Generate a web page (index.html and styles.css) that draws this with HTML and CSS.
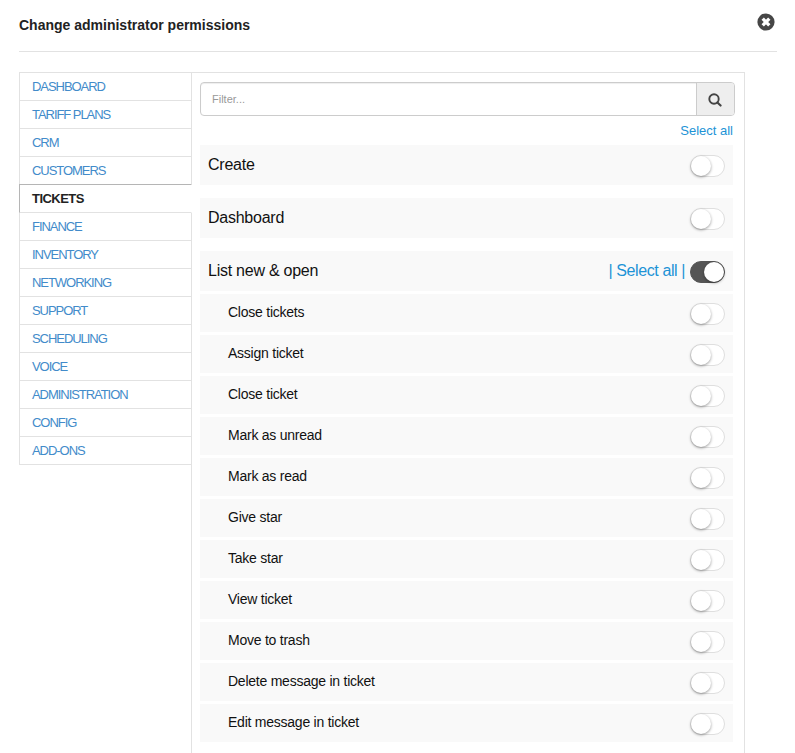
FILE: index.html
```html
<!DOCTYPE html>
<html lang="en">
<head>
<meta charset="utf-8">
<title>Change administrator permissions</title>
<link rel="stylesheet" href="styles.css">
</head>
<body>
<header class="dialog-header">
  <h1>Change administrator permissions</h1>
  <svg class="close" viewBox="0 0 18 18" width="18" height="18"><circle cx="9" cy="9" r="8.6" fill="#464646"/><path d="M5.7 5.7l6.6 6.6M12.3 5.7l-6.6 6.6" stroke="#fff" stroke-width="3.3"/></svg>
</header>
<main class="layout">
  <nav class="tabs">
    <a>DASHBOARD</a>
    <a>TARIFF PLANS</a>
    <a>CRM</a>
    <a>CUSTOMERS</a>
    <a class="active">TICKETS</a>
    <a>FINANCE</a>
    <a>INVENTORY</a>
    <a>NETWORKING</a>
    <a>SUPPORT</a>
    <a>SCHEDULING</a>
    <a>VOICE</a>
    <a>ADMINISTRATION</a>
    <a>CONFIG</a>
    <a>ADD-ONS</a>
  </nav>
  <section class="panel">
    <div class="filter">
      <span class="placeholder">Filter...</span>
      <span class="search"><svg viewBox="0 0 14 14" width="14" height="14"><circle cx="6" cy="6" r="4.7" fill="none" stroke="#444" stroke-width="1.9"/><path d="M9.4 9.4l3.2 3.2" stroke="#444" stroke-width="2.1" stroke-linecap="round"/></svg></span>
    </div>
    <a class="select-all">Select all</a>
    <div class="row group"><span class="label">Create</span><i class="toggle"></i></div>
    <div class="row group"><span class="label">Dashboard</span><i class="toggle"></i></div>
    <div class="row group parent"><span class="label">List new &amp; open</span><span class="group-select">| Select all |</span><i class="toggle on"></i></div>
    <div class="row child"><span class="label">Close tickets</span><i class="toggle"></i></div>
    <div class="row child"><span class="label">Assign ticket</span><i class="toggle"></i></div>
    <div class="row child"><span class="label">Close ticket</span><i class="toggle"></i></div>
    <div class="row child"><span class="label">Mark as unread</span><i class="toggle"></i></div>
    <div class="row child"><span class="label">Mark as read</span><i class="toggle"></i></div>
    <div class="row child"><span class="label">Give star</span><i class="toggle"></i></div>
    <div class="row child"><span class="label">Take star</span><i class="toggle"></i></div>
    <div class="row child"><span class="label">View ticket</span><i class="toggle"></i></div>
    <div class="row child"><span class="label">Move to trash</span><i class="toggle"></i></div>
    <div class="row child"><span class="label">Delete message in ticket</span><i class="toggle"></i></div>
    <div class="row child"><span class="label">Edit message in ticket</span><i class="toggle"></i></div>
  </section>
</main>
</body>
</html>
```
FILE: styles.css
```css
* { box-sizing: border-box; }
body {
  margin: 0;
  background: #fff;
  color: #222;
  font-family: "Liberation Sans", Arial, sans-serif;
}
.dialog-header {
  display: flex;
  justify-content: space-between;
  margin: 0 18px 0 19px;
  height: 52px;
  border-bottom: 1px solid #e2e2e2;
}
h1 { margin: 17px 0 0; font-size: 14px; line-height: 17px; }
.close { margin: 13px 2px 0 0; }
.layout {
  display: flex;
  align-items: flex-start;
  margin: 20px 0 0 19px;
}
.tabs {
  position: relative;
  z-index: 1;
  width: 173px;
  margin-right: -1px;
  border-top: 1px solid #e2e2e2;
}
.tabs a {
  display: block;
  height: 28px;
  padding-left: 12px;
  border: 1px solid #e2e2e2;
  border-top: 0;
  color: #428bca;
  font-size: 13px;
  line-height: 28px;
  letter-spacing: -1.05px;
}
.tabs .active {
  height: 29px;
  margin-top: -1px;
  border-top: 1px solid #b5b5b5;
  border-left-color: #b5b5b5;
  border-right-color: #fff;
  background: #fff;
  color: #222;
  font-weight: bold;
  letter-spacing: -0.55px;
}
.panel {
  width: 554px;
  height: 681px;
  padding: 9px 9px 0 8px;
  border: 1px solid #e2e2e2;
  border-bottom: 0;
}
.filter {
  display: flex;
  width: 535px;
  height: 34px;
  border: 1px solid #ccc;
  border-radius: 4px;
  overflow: hidden;
  box-shadow: inset 0 1px 1px rgba(0, 0, 0, .07);
}
.placeholder {
  flex: 1;
  padding-left: 11px;
  color: #999;
  font-size: 11px;
  line-height: 32px;
}
.search {
  display: flex;
  align-items: center;
  justify-content: center;
  width: 38px;
  padding: 1px 2px 0 0;
  border-left: 1px solid #ccc;
  background: #eee;
}
.select-all {
  display: block;
  width: 533px;
  height: 29px;
  color: #1d93d6;
  font-size: 13px;
  line-height: 30px;
  text-align: right;
}
.row {
  display: flex;
  width: 533px;
  padding-right: 8px;
  background: #f9f9f9;
  color: #111;
}
.label { flex: 1; }
.group {
  height: 40px;
  margin-bottom: 13px;
  padding-left: 8px;
  font-size: 16px;
  line-height: 39px;
  letter-spacing: -0.25px;
}
.parent { margin-bottom: 3px; }
.child {
  height: 38px;
  margin-bottom: 3px;
  padding-left: 28px;
  font-size: 14px;
  line-height: 37px;
  letter-spacing: -0.24px;
}
.child:last-child { margin-bottom: 0; }
.group-select {
  margin-right: 5px;
  color: #1d93d6;
  letter-spacing: -0.4px;
}
.toggle {
  position: relative;
  width: 35px;
  height: 22px;
  margin-top: 10px;
  border: 1px solid #dfdfdf;
  border-radius: 11px;
  background: #fff;
}
.child .toggle { margin-top: 9px; }
.toggle::after {
  content: "";
  position: absolute;
  top: 0;
  left: 0;
  width: 20px;
  height: 20px;
  border-radius: 50%;
  background: #fff;
  box-shadow: 0 1px 3px rgba(0, 0, 0, .4);
}
.toggle.on { border-color: #555; background: #555; }
.toggle.on::after { left: 13px; }
```
